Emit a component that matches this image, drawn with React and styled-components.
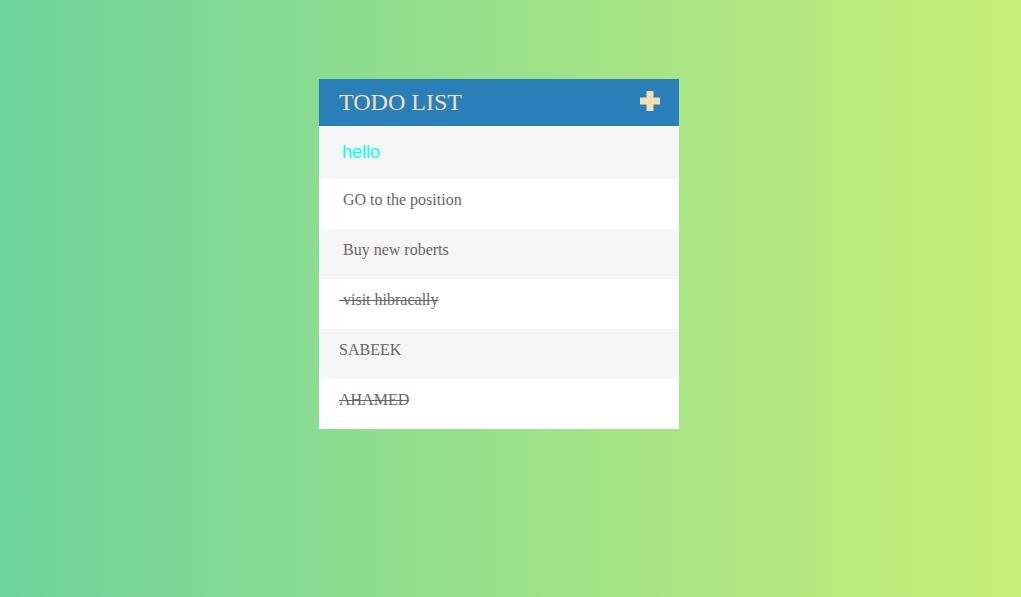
import React, { useState } from "react";
import styled, { createGlobalStyle } from "styled-components";

const GlobalStyle = createGlobalStyle`
  html, body {
    margin: 0;
    padding: 0;
  }
  body {
    font-family: "Liberation Serif", "Times New Roman", serif;
  }
`;

const Page = styled.div`
  min-height: 100vh;
  box-sizing: border-box;
  display: flex;
  justify-content: center;
  align-items: flex-start;
  padding: 79px 23px 0 0;
  background: linear-gradient(to right, #6dd39c, #c8ef77);
`;

const Card = styled.div`
  width: 360px;
  background: #fff;
`;

const Header = styled.div`
  height: 47px;
  display: flex;
  align-items: center;
  justify-content: space-between;
  padding: 0 19px 0 20px;
  background: #2980b9;
`;

const Title = styled.h1`
  margin: 0;
  font-size: 24px;
  font-weight: 400;
  color: #f5deb3;
`;

const AddButton = styled.span`
  display: flex;
  margin-top: -3px;
  cursor: pointer;
`;

const InputRow = styled.div`
  height: 53px;
  display: flex;
  align-items: center;
  background: #f6f6f6;
`;

const Input = styled.input`
  width: 100%;
  border: none;
  outline: none;
  background: transparent;
  padding: 0 0 0 23px;
  font-family: "Liberation Sans", Arial, sans-serif;
  font-size: 18px;
  color: #00ffff;
`;

const List = styled.ul`
  list-style: none;
  margin: 0;
  padding: 0;
`;

const Item = styled.li`
  height: 50px;
  box-sizing: border-box;
  line-height: 42px;
  padding: 0 0 8px 20px;
  font-size: 16px;
  color: #666;
  white-space: pre;
  background: ${(p) => (p.$odd ? "#f6f6f6" : "#fff")};
  text-decoration: ${(p) => (p.$done ? "line-through" : "none")};
  cursor: pointer;
`;

const todos = [
  { text: " GO to the position", done: false },
  { text: " Buy new roberts", done: false },
  { text: " visit hibracally", done: true },
  { text: "SABEEK", done: false },
  { text: "AHAMED", done: true },
];

const App = () => {
  const [value, setValue] = useState("hello");
  const [items, setItems] = useState(todos);

  function toggle(i) {
    setItems(items.map((t, j) => (j === i ? { ...t, done: !t.done } : t)));
  }

  return (
    <>
      <GlobalStyle />
      <Page>
        <Card>
          <Header>
            <Title>TODO LIST</Title>
            <AddButton>
              <svg width="20" height="20" viewBox="0 0 20 20">
                <path
                  d="M6.5 0h7v6.5H20v7h-6.5V20h-7v-6.5H0v-7h6.5z"
                  fill="#f5deb3"
                />
              </svg>
            </AddButton>
          </Header>
          <InputRow>
            <Input value={value} onChange={(e) => setValue(e.target.value)} />
          </InputRow>
          <List>
            {items.map((t, i) => (
              <Item
                key={i}
                $odd={i % 2 === 1}
                $done={t.done}
                onClick={() => toggle(i)}
              >
                {t.text}
              </Item>
            ))}
          </List>
        </Card>
      </Page>
    </>
  );
};

export default App;
